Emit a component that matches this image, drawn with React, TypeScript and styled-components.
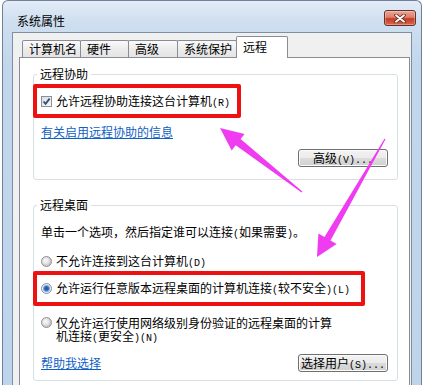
import styled, { createGlobalStyle } from "styled-components";

const GlobalStyle = createGlobalStyle`
  html, body {
    margin: 0;
    padding: 0;
    background: #ffffff;
  }
  body {
    width: 425px;
    height: 385px;
    overflow: hidden;
    font-family: "Noto Sans CJK SC", "Noto Sans", sans-serif;
    font-size: 12px;
    color: #000000;
  }
`;

const tabs = [
  { label: "计算机名", width: 59 },
  { label: "硬件", width: 49 },
  { label: "高级", width: 50 },
  { label: "系统保护", width: 60 },
  { label: "远程", width: 52, active: true },
];

type Pt = [number, number];

// tapered annotation arrow from tail to tip
const arrowPoints = (tip: Pt, tail: Pt, headLen: number, headHalf: number, shaftHalf: number, tailHalf: number) => {
  const dx = tip[0] - tail[0];
  const dy = tip[1] - tail[1];
  const len = Math.hypot(dx, dy);
  const ux = dx / len;
  const uy = dy / len;
  const nx = -uy;
  const ny = ux;
  const bx = tip[0] - ux * headLen;
  const by = tip[1] - uy * headLen;
  const pts: Pt[] = [
    tip,
    [bx + nx * headHalf, by + ny * headHalf],
    [bx + nx * shaftHalf, by + ny * shaftHalf],
    [tail[0] + nx * tailHalf, tail[1] + ny * tailHalf],
    [tail[0] - nx * tailHalf, tail[1] - ny * tailHalf],
    [bx - nx * shaftHalf, by - ny * shaftHalf],
    [bx - nx * headHalf, by - ny * headHalf],
  ];
  return pts.map((p) => p.map((v) => v.toFixed(1)).join(",")).join(" ");
};

const App = () => {
  return (
    <Page>
      <GlobalStyle />
      <Window>
        <TitleBar>
          <Title>系统属性</Title>
          <CloseButton>
            <svg width="12" height="9" viewBox="0 0 12 9">
              <path d="M2 1.2 L10 7.8 M10 1.2 L2 7.8" stroke="#5a2a22" strokeWidth="3.4" strokeLinecap="round" />
              <path d="M2 1.2 L10 7.8 M10 1.2 L2 7.8" stroke="#ffffff" strokeWidth="1.8" strokeLinecap="round" />
            </svg>
          </CloseButton>
        </TitleBar>
        <Client>
          <TabRow>
            {tabs.map((t, i) => (
              <Tab key={t.label} $width={t.width} $active={t.active} $first={i === 0}>
                {t.label}
              </Tab>
            ))}
          </TabRow>
          <Panel>
            <Group>
              <Legend>远程协助</Legend>
              <Highlight $width={208} $padBottom={6}>
                <OptionRow>
                  <CheckBox>
                    <svg width="9" height="9" viewBox="0 0 9 9">
                      <path d="M1.5 4.5 L3.6 6.8 L7.6 1.6" fill="none" stroke="#34497a" strokeWidth="1.8" />
                    </svg>
                  </CheckBox>
                  <OptionText>
                    允许远程协助连接这台计算机<Half>(R)</Half>
                  </OptionText>
                </OptionRow>
              </Highlight>
              <Link $top={7}>有关启用远程协助的信息</Link>
              <ButtonRow $top={10}>
                <Button>
                  高级<Half>(V)...</Half>
                </Button>
              </ButtonRow>
            </Group>

            <Group $top={18} $padBottom={8}>
              <Legend>远程桌面</Legend>
              <Description>
                单击一个选项，然后指定谁可以连接<Half>(</Half>如果需要<Half>)</Half>。
              </Description>
              <OptionRow $top={15}>
                <Radio />
                <OptionText>
                  不允许连接到这台计算机<Half>(D)</Half>
                </OptionText>
              </OptionRow>
              <Highlight $width={332} $top={3} $padBottom={7}>
                <OptionRow>
                  <Radio $checked />
                  <OptionText>
                    允许运行任意版本远程桌面的计算机连接<Half>(</Half>较不安全<Half>)(L)</Half>
                  </OptionText>
                </OptionRow>
              </Highlight>
              <OptionRow $top={10} $wrap>
                <Radio />
                <OptionText $wrap>
                  仅允许运行使用网络级别身份验证的远程桌面的计算机连接<Half>(</Half>更安全<Half>)(N)</Half>
                </OptionText>
              </OptionRow>
              <ButtonRow $top={12} $between>
                <Link>帮助我选择</Link>
                <Button>
                  选择用户<Half>(S)...</Half>
                </Button>
              </ButtonRow>
            </Group>
          </Panel>
        </Client>
      </Window>
      <Annotations width="425" height="385" viewBox="0 0 425 385">
        <polygon points={arrowPoints([220, 128], [302, 192], 23, 10.5, 4, 0.6)} fill="#f03cf0" />
        <polygon points={arrowPoints([317, 257], [385, 139], 21, 10.5, 3.5, 0.6)} fill="#f03cf0" />
      </Annotations>
    </Page>
  );
};
export default App;

const Page = styled.div`
  position: relative;
  width: 425px;
  height: 385px;
  overflow: hidden;
`;

const Window = styled.div`
  box-sizing: border-box;
  margin-left: 2px;
  width: 420px;
  height: 420px;
  display: flex;
  flex-direction: column;
  border: 1px solid #6f8197;
  border-bottom: none;
  border-radius: 6px 6px 0 0;
  background: linear-gradient(to bottom, #e3ecf7 0px, #cfdff0 20px, #c3d7ec 60px, #bdd4eb 100%);
`;

const TitleBar = styled.div`
  display: flex;
  align-items: flex-start;
  height: 31px;
  padding-left: 14px;
`;

const Title = styled.div`
  margin-top: 13px;
  line-height: 14px;
  font-size: 12px;
  color: #000000;
`;

const CloseButton = styled.div`
  box-sizing: border-box;
  width: 32px;
  height: 16px;
  margin: 9px 5px 0 auto;
  display: flex;
  align-items: center;
  justify-content: center;
  border: 1px solid #6b2e25;
  border-radius: 3px;
  background: linear-gradient(to bottom, #eaa596 0%, #dc7f69 45%, #c63b24 55%, #d56a52 100%);
  box-shadow: inset 0 0 0 1px rgba(255, 255, 255, 0.3);
`;

const Client = styled.div`
  flex: 1;
  display: flex;
  flex-direction: column;
  margin: 0 9px;
  padding-top: 3px;
  border: 1px solid #7f8fa2;
  border-bottom: none;
  background: #f0f0f0;
`;

const TabRow = styled.div`
  position: relative;
  z-index: 1;
  display: flex;
  align-items: flex-end;
  height: 21px;
  padding-left: 9px;
`;

const Tab = styled.div<{ $width: number; $active?: boolean; $first?: boolean }>`
  box-sizing: border-box;
  width: ${(p) => p.$width}px;
  height: ${(p) => (p.$active ? 22 : 17)}px;
  margin-left: ${(p) => (p.$first ? 0 : -1)}px;
  margin-bottom: ${(p) => (p.$active ? -1 : 0)}px;
  padding: ${(p) => (p.$active ? "3px" : "1px")} 0 0 6px;
  border: 1px solid #898c95;
  border-bottom: none;
  border-radius: 2px 2px 0 0;
  background: ${(p) => (p.$active ? "#ffffff" : "linear-gradient(to bottom, #fafafa, #ececec 50%, #e4e4e4)")};
  line-height: 14px;
  font-size: 12px;
  white-space: nowrap;
`;

const Panel = styled.div`
  flex: 1;
  margin: 0 1px 0 6px;
  border: 1px solid #898c95;
  border-bottom: none;
  background: #ffffff;
`;

const Group = styled.fieldset<{ $top?: number; $padBottom?: number }>`
  box-sizing: border-box;
  min-width: 0;
  margin: ${(p) => p.$top ?? 9}px 11px 0 13px;
  padding: 0 9px ${(p) => p.$padBottom ?? 12}px 7px;
  border: 1px solid #d5dfe5;
  border-radius: 3px;
`;

const Legend = styled.legend`
  margin-left: -4px;
  padding: 0 3px;
  line-height: 14px;
  font-size: 12px;
`;

const Highlight = styled.div<{ $width: number; $top?: number; $padBottom: number }>`
  box-sizing: border-box;
  width: ${(p) => p.$width}px;
  margin: ${(p) => p.$top ?? 3}px 0 0 -8px;
  padding: 6px 0 ${(p) => p.$padBottom}px 4px;
  border: 4px solid #ee1111;
  border-radius: 2px;
`;

const OptionRow = styled.div<{ $top?: number; $wrap?: boolean }>`
  display: flex;
  align-items: ${(p) => (p.$wrap ? "flex-start" : "center")};
  gap: 4px;
  margin-top: ${(p) => p.$top ?? 0}px;
`;

const OptionText = styled.span<{ $wrap?: boolean }>`
  display: block;
  height: ${(p) => (p.$wrap ? 26 : 14)}px;
  line-height: ${(p) => (p.$wrap ? 13 : 14)}px;
  font-size: 12px;
  white-space: ${(p) => (p.$wrap ? "normal" : "nowrap")};
  max-width: ${(p) => (p.$wrap ? "280px" : "none")};
`;

// half-width latin run, like the 6px cells of the system font
const Half = styled.span`
  font-family: "Liberation Mono", "DejaVu Sans Mono", monospace;
  font-size: 10px;
  line-height: 0;
`;

const CheckBox = styled.span`
  box-sizing: border-box;
  flex: none;
  width: 11px;
  height: 11px;
  display: flex;
  align-items: center;
  justify-content: center;
  border: 1px solid #8e8f8f;
  background: linear-gradient(135deg, #d9dde3, #f7f8fa);
`;

const Radio = styled.span<{ $checked?: boolean }>`
  box-sizing: border-box;
  flex: none;
  width: 11px;
  height: 11px;
  margin-top: 1px;
  border: 1px solid #8e8f8f;
  border-radius: 50%;
  background: ${(p) =>
    p.$checked
      ? "radial-gradient(circle at 50% 50%, #1f4fa0 0, #2f6bc5 2px, #8fb6e6 3.2px, #e8eef6 4px)"
      : "radial-gradient(circle at 40% 40%, #fafafa 0, #e4e4e4 3px, #c8c8c8 5px)"};
`;

const Link = styled.a<{ $top?: number }>`
  display: block;
  margin-top: ${(p) => p.$top ?? 0}px;
  line-height: 14px;
  font-size: 12px;
  color: #0f5fc4;
  text-decoration: underline;
  cursor: pointer;
`;

const Description = styled.div`
  height: 14px;
  margin-top: 13px;
  line-height: 14px;
  font-size: 12px;
  white-space: nowrap;
`;

const ButtonRow = styled.div<{ $top: number; $between?: boolean }>`
  display: flex;
  align-items: center;
  justify-content: ${(p) => (p.$between ? "space-between" : "flex-end")};
  margin-top: ${(p) => p.$top}px;
`;

const Button = styled.button`
  box-sizing: border-box;
  width: 90px;
  height: 18px;
  padding: 0;
  border: 1px solid #707070;
  border-radius: 3px;
  background: linear-gradient(to bottom, #f3f3f3 0%, #ebebeb 50%, #dcdcdc 50%, #d0d0d0 100%);
  box-shadow: inset 0 0 0 1px #fbfbfb;
  font-family: inherit;
  font-size: 12px;
  line-height: 14px;
  color: #000000;
  white-space: nowrap;
`;

const Annotations = styled.svg`
  position: absolute;
  left: 0;
  top: 0;
  pointer-events: none;
`;
